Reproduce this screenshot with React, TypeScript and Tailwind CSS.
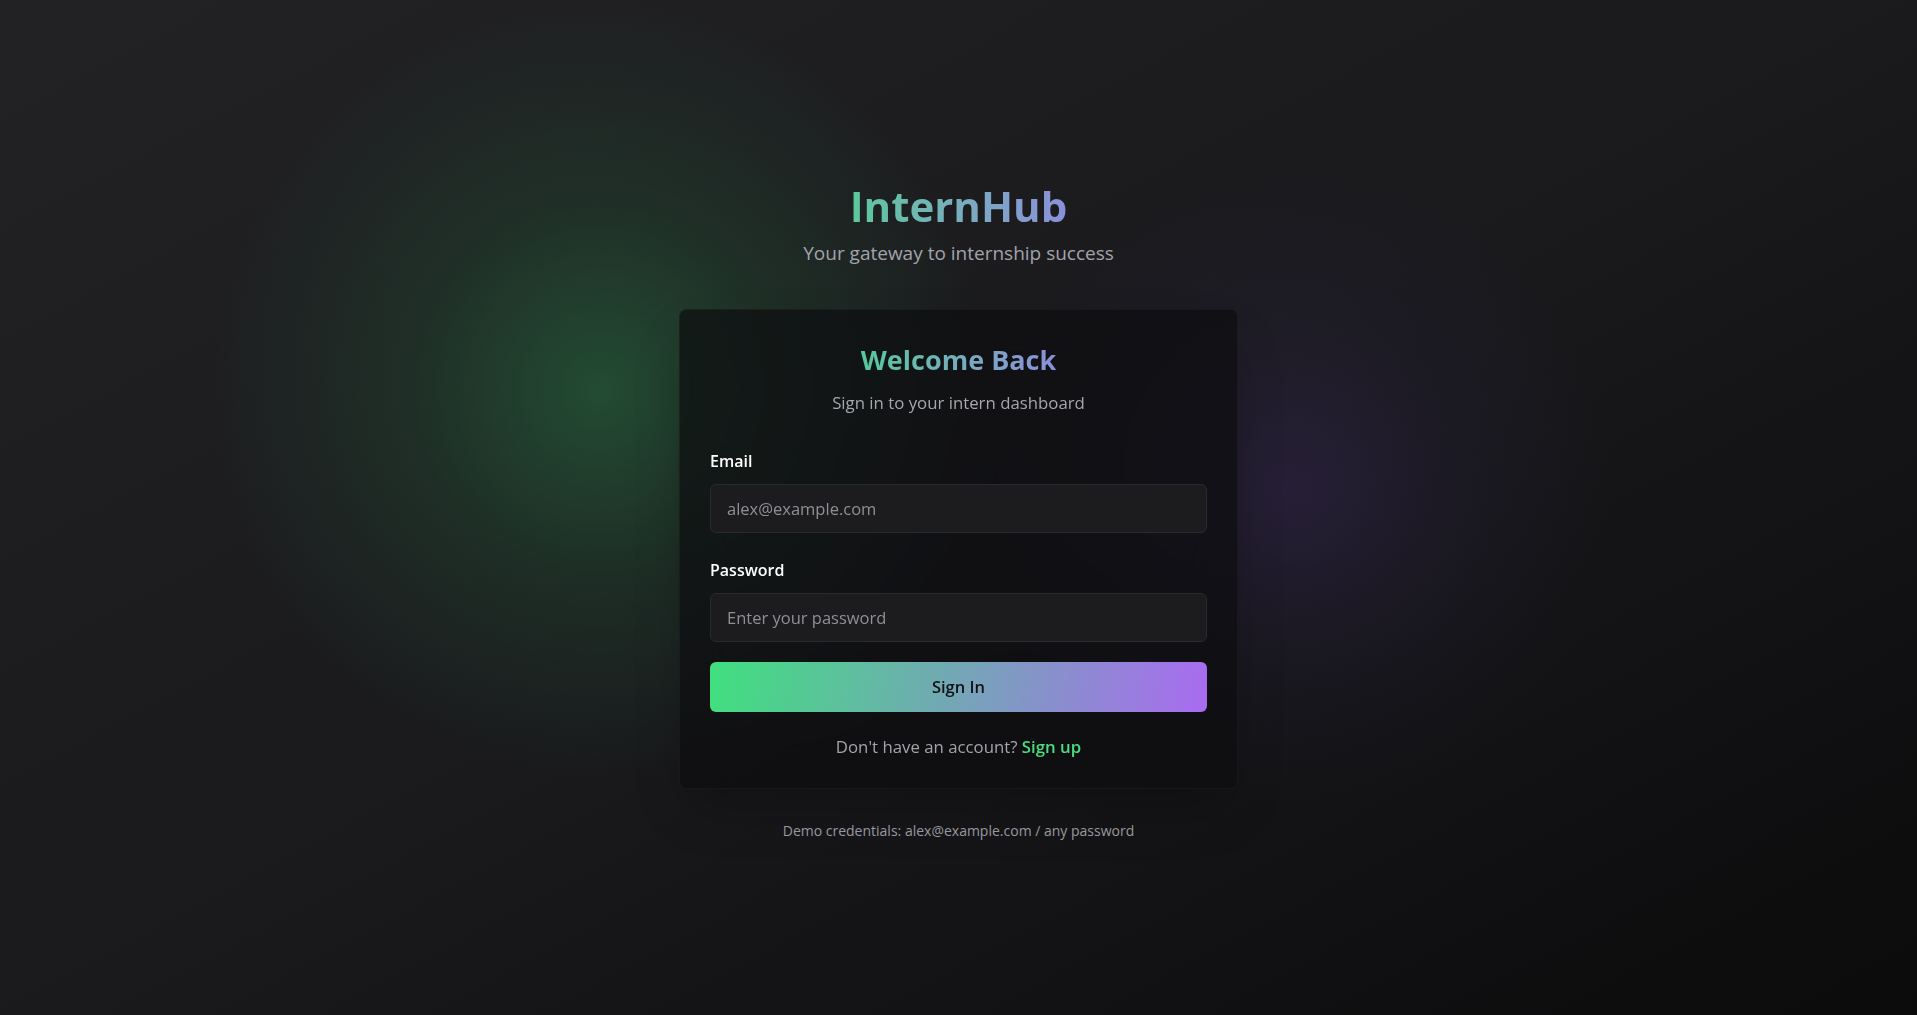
import { useState } from "react";

const FONT = { fontFamily: '"Open Sans", "Noto Sans", "Liberation Sans", sans-serif' };

export default function App() {
  const [email, setEmail] = useState("");
  const [password, setPassword] = useState("");

  return (
    <div
      style={FONT}
      className="relative min-h-screen overflow-hidden bg-linear-to-br from-[#222225] via-[#1a1a1d] to-[#0b0b0c] text-white"
    >
      {/* background glows */}
      <div className="pointer-events-none absolute left-[210px] top-[0px] h-[780px] w-[780px] rounded-full bg-[radial-gradient(circle,rgba(38,100,60,0.65)_0%,rgba(35,82,52,0.32)_35%,transparent_70%)]" />
      <div className="pointer-events-none absolute left-[976px] top-[170px] h-[640px] w-[640px] rounded-full bg-[radial-gradient(circle,rgba(62,42,100,0.38)_0%,rgba(45,35,72,0.16)_40%,transparent_70%)]" />

      <div className="relative flex min-h-screen flex-col items-center justify-center px-4 pt-1">
        <div className="mb-[42px] flex flex-col items-center">
          <h1 className="bg-linear-to-r from-[#5cc89b] to-[#8a8fda] bg-clip-text text-[42px] font-bold leading-[56px] text-transparent">
            InternHub
          </h1>
          <p className="mt-[5px] text-[19px] leading-7 text-[#a3a3ab]">
            Your gateway to internship success
          </p>
        </div>

        <div className="w-[559px] rounded-lg border border-white/[0.04] bg-[#0d0d10]/70 px-[30px] pb-[29px] pt-8 shadow-2xl backdrop-blur-xl">
          <div className="mb-[34px] text-center">
            <h2 className="inline-block bg-linear-to-r from-[#55c89b] to-[#8a8fda] bg-clip-text text-[27px] font-bold leading-9 text-transparent">
              Welcome Back
            </h2>
            <p className="mt-[13px] text-[16.8px] leading-6 text-[#a6a6ad]">
              Sign in to your intern dashboard
            </p>
          </div>

          <form className="flex flex-col" onSubmit={(e) => e.preventDefault()}>
            <label className="mb-[11px] block text-[16px] font-semibold leading-6 text-white">
              Email
            </label>
            <input
              type="email"
              value={email}
              onChange={(e) => setEmail(e.target.value)}
              placeholder="alex@example.com"
              className="h-[49px] rounded-md border border-[#2a2a2f] bg-[#1c1c1f] px-4 text-[16.5px] text-white outline-none placeholder:text-[#8f8f96]"
            />

            <label className="mb-[11px] mt-[25px] block text-[16px] font-semibold leading-6 text-white">
              Password
            </label>
            <input
              type="password"
              value={password}
              onChange={(e) => setPassword(e.target.value)}
              placeholder="Enter your password"
              className="h-[49px] rounded-md border border-[#2a2a2f] bg-[#1c1c1f] px-4 text-[16.5px] text-white outline-none placeholder:text-[#8f8f96]"
            />

            <button
              type="submit"
              className="mt-5 h-[50px] rounded-md bg-linear-[100deg] from-[#40e07e] to-[#a96bf0] text-[16.5px] font-semibold text-[#111114]"
            >
              Sign In
            </button>
          </form>

          <p className="mt-[23px] text-center text-[16.8px] leading-6 text-[#a3a3aa]">
            Don't have an account?{" "}
            <a href="#" className="font-semibold text-[#4ade80]">
              Sign up
            </a>
          </p>
        </div>

        <p className="mt-8 text-[14px] leading-5 text-[#9d9da5]">
          Demo credentials: alex@example.com / any password
        </p>
      </div>
    </div>
  );
}
